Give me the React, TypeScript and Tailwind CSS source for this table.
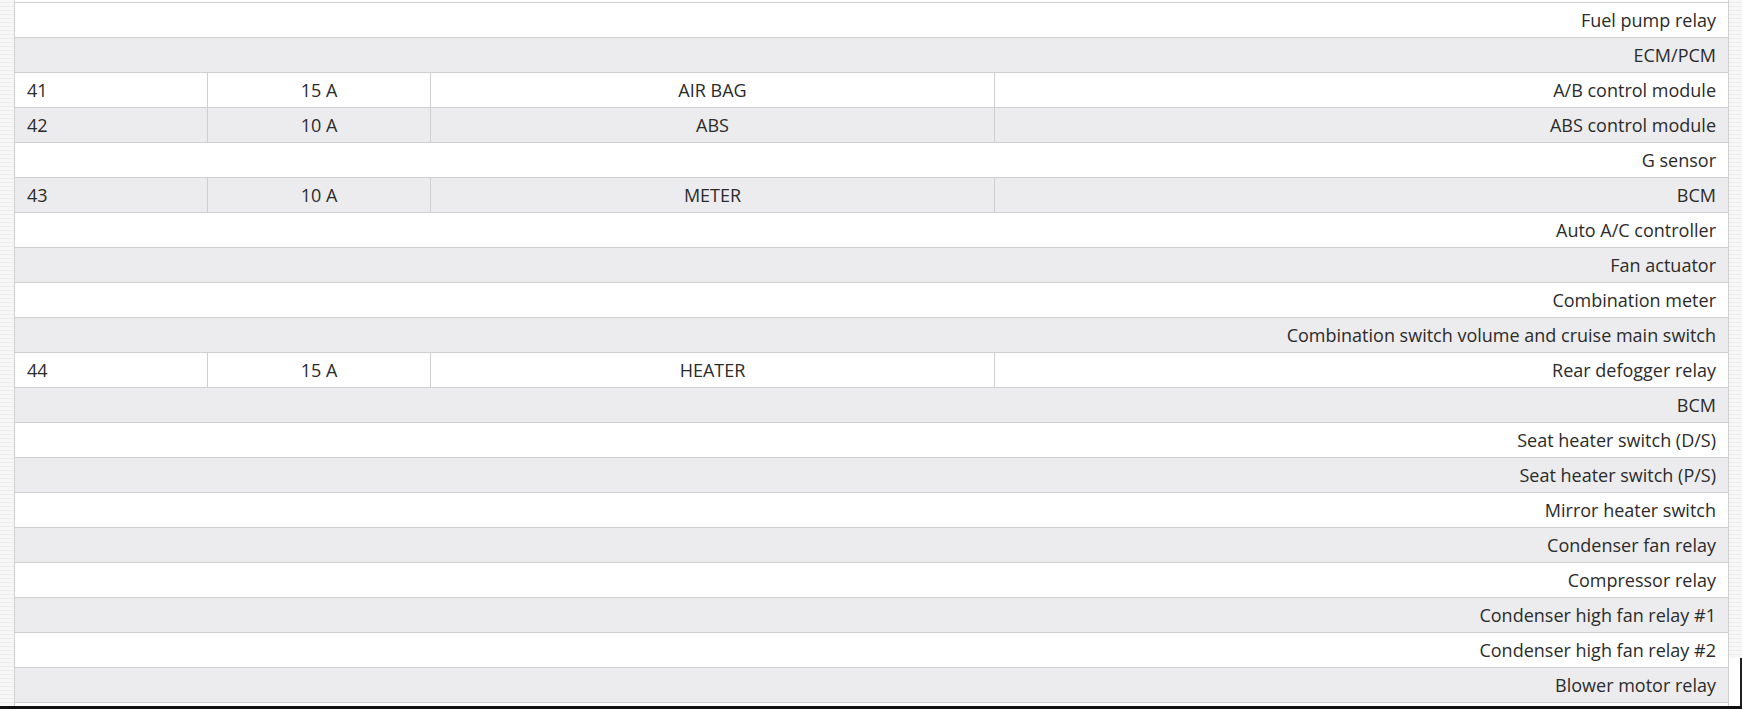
import React from 'react';

type Row = {
  no?: string;
  amp?: string;
  name?: string;
  load: string;
};

const rows: Row[] = [
  { load: 'Fuel pump relay' },
  { load: 'ECM/PCM' },
  { no: '41', amp: '15 A', name: 'AIR BAG', load: 'A/B control module' },
  { no: '42', amp: '10 A', name: 'ABS', load: 'ABS control module' },
  { load: 'G sensor' },
  { no: '43', amp: '10 A', name: 'METER', load: 'BCM' },
  { load: 'Auto A/C controller' },
  { load: 'Fan actuator' },
  { load: 'Combination meter' },
  { load: 'Combination switch volume and cruise main switch' },
  { no: '44', amp: '15 A', name: 'HEATER', load: 'Rear defogger relay' },
  { load: 'BCM' },
  { load: 'Seat heater switch (D/S)' },
  { load: 'Seat heater switch (P/S)' },
  { load: 'Mirror heater switch' },
  { load: 'Condenser fan relay' },
  { load: 'Compressor relay' },
  { load: 'Condenser high fan relay #1' },
  { load: 'Condenser high fan relay #2' },
  { load: 'Blower motor relay' },
];

const Margin: React.FC = () => (
  <div className="w-[14px] shrink-0 bg-[#f3f3f3] bg-[repeating-linear-gradient(0deg,#f7f7f7_0px,#f7f7f7_3px,#ededed_3px,#ededed_4px)]" />
);

const App: React.FC = () => {
  return (
    <div className="flex h-[709px] w-full flex-col overflow-hidden bg-white font-['Open_Sans',sans-serif] text-[18px] text-[#2b2b2b]">
      <div className="flex min-h-0 flex-1">
        <Margin />
        <div className="flex flex-1 flex-col border-x border-[#cfcfcf] bg-white">
          <div className="h-[2px] bg-white" />
          {rows.map((row, i) => {
            const bg = i % 2 === 0 ? 'bg-white' : 'bg-[#ececee]';
            if (row.no) {
              return (
                <div
                  key={i}
                  className={`grid h-[35px] grid-cols-[192px_223px_564px_1fr] border-t border-[#cfcfcf] ${bg}`}
                >
                  <div className="flex items-center px-3">{row.no}</div>
                  <div className="flex items-center justify-center border-l border-[#cfcfcf] px-3">{row.amp}</div>
                  <div className="flex items-center justify-center border-l border-[#cfcfcf] px-3">{row.name}</div>
                  <div className="flex items-center justify-end border-l border-[#cfcfcf] px-3">{row.load}</div>
                </div>
              );
            }
            return (
              <div
                key={i}
                className={`flex h-[35px] items-center justify-end border-t border-[#cfcfcf] px-3 ${bg}`}
              >
                {row.load}
              </div>
            );
          })}
          <div className="flex-1 border-t border-[#cfcfcf] bg-white" />
        </div>
        <div className="flex w-[13px] shrink-0 flex-col">
          <div className="flex-1 bg-[#f3f3f3] bg-[repeating-linear-gradient(0deg,#f7f7f7_0px,#f7f7f7_3px,#ededed_3px,#ededed_4px)]" />
          <div className="ml-auto h-[48px] w-[2px] bg-[#222222]" />
        </div>
      </div>
      <div className="h-[3px] bg-[#111111]" />
    </div>
  );
};

export default App;
